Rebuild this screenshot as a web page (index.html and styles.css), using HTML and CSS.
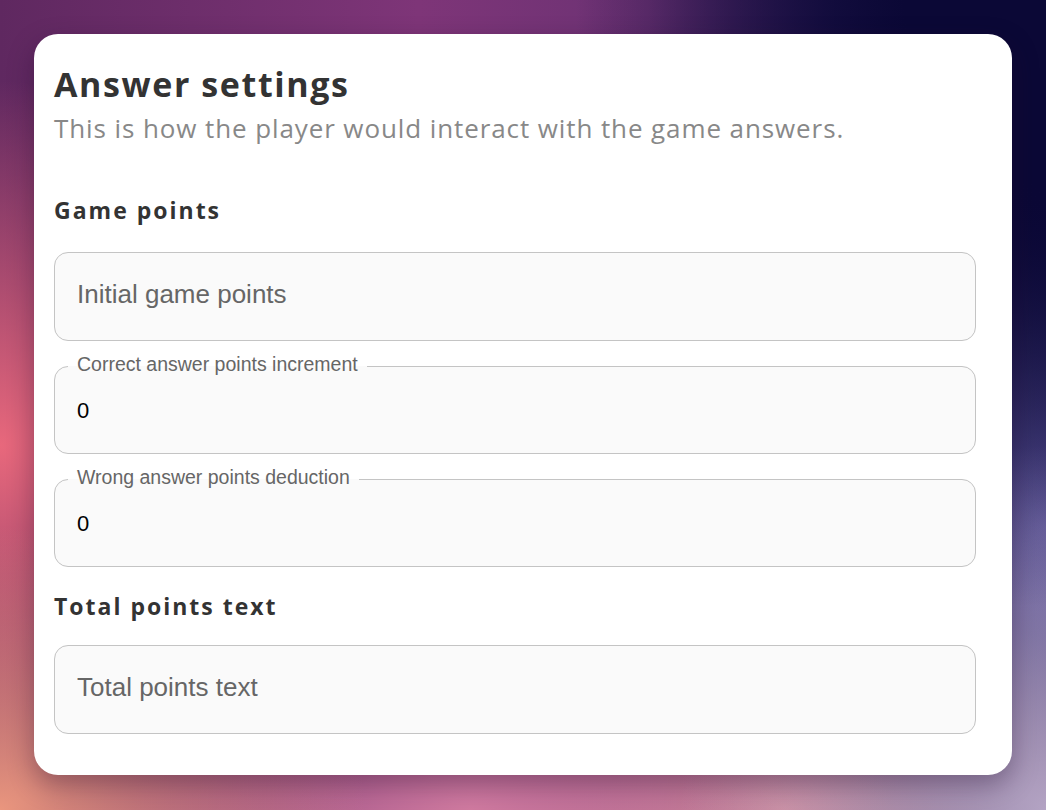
FILE: index.html
```html
<!DOCTYPE html>
<html lang="en">
<head>
<meta charset="utf-8">
<title>Answer settings</title>
<link rel="stylesheet" href="styles.css">
</head>
<body>
<main class="page">
  <section class="card">
    <h1 class="title">Answer settings</h1>
    <p class="subtitle">This is how the player would interact with the game answers.</p>

    <h2 class="section section-first">Game points</h2>
    <fieldset class="field field-empty">
      <input class="field-input" type="text" placeholder="Initial game points">
    </fieldset>
    <fieldset class="field field-filled">
      <legend class="field-label">Correct answer points increment</legend>
      <input class="field-input" type="text" value="0">
    </fieldset>
    <fieldset class="field field-filled">
      <legend class="field-label">Wrong answer points deduction</legend>
      <input class="field-input" type="text" value="0">
    </fieldset>

    <h2 class="section section-second">Total points text</h2>
    <fieldset class="field field-empty">
      <input class="field-input" type="text" placeholder="Total points text">
    </fieldset>
  </section>
</main>
</body>
</html>
```
FILE: styles.css
```css
html, body {
  margin: 0;
  padding: 0;
  height: 100%;
}

body {
  background-color: #8a3d80;
  background-image:
    radial-gradient(ellipse 45% 75% at 100% 0%, #0b0836 0%, #0b0836 30%, rgba(11, 8, 54, 0) 100%),
    radial-gradient(ellipse 35% 45% at 100% 100%, #b4a4c4 0%, rgba(180, 164, 196, 0) 100%),
    radial-gradient(ellipse 30% 40% at 100% 65%, #6a62aa 0%, rgba(106, 98, 170, 0) 100%),
    radial-gradient(ellipse 35% 35% at 0% 100%, #ea967e 0%, rgba(234, 150, 126, 0) 100%),
    radial-gradient(ellipse 35% 45% at 0% 55%, #e8687c 0%, rgba(232, 104, 124, 0) 100%),
    radial-gradient(ellipse 40% 35% at 45% 100%, #d07aa0 0%, rgba(208, 122, 160, 0) 100%),
    radial-gradient(ellipse 35% 30% at 75% 100%, #d4909a 0%, rgba(212, 144, 154, 0) 100%),
    linear-gradient(90deg, #5f2860 0%, #7e3578 40%, #6c3274 62%, #2a1a55 80%, #0b0836 100%);
  background-repeat: no-repeat;
  font-family: "Liberation Sans", Arial, sans-serif;
}

.page {
  box-sizing: border-box;
  height: 100%;
  padding: 34px;
}

.card {
  box-sizing: border-box;
  width: 978px;
  background: #ffffff;
  border-radius: 24px;
  padding: 30px 36px 41px 20px;
  box-shadow: 0 10px 26px rgba(30, 10, 40, 0.35);
}

.title {
  margin: 0;
  font-family: "Open Sans", "Noto Sans", sans-serif;
  font-weight: 700;
  font-size: 34px;
  line-height: 40px;
  letter-spacing: 1.6px;
  color: #333333;
}

.subtitle {
  margin: 8px 0 0;
  font-family: "Open Sans", "Noto Sans", sans-serif;
  font-weight: 400;
  font-size: 26px;
  line-height: 32px;
  letter-spacing: 0.9px;
  color: #888888;
}

.section {
  margin: 0;
  font-family: "Open Sans", "Noto Sans", sans-serif;
  font-weight: 700;
  font-size: 23px;
  line-height: 28px;
  letter-spacing: 2px;
  color: #333333;
}

.section-first {
  margin-top: 52px;
  margin-bottom: 28px;
}

.section-second {
  margin-top: 25px;
  margin-bottom: 25px;
}

.field {
  box-sizing: border-box;
  display: block;
  width: 922px;
  margin: 0;
  padding: 0 22px;
  border: 1px solid #c4c4c4;
  border-radius: 14px;
  background: #fafafa;
  min-width: 0;
}

.field + .field {
  margin-top: 12px;
}

.field-label {
  margin-left: -9px;
  padding: 0 9px 4px;
  font-size: 19.5px;
  line-height: 22px;
  color: #666666;
}

.field-input {
  box-sizing: border-box;
  display: block;
  width: 100%;
  margin: 0;
  border: 0;
  outline: none;
  background: transparent;
  font-family: "Liberation Sans", Arial, sans-serif;
  color: #000000;
}

.field-empty .field-input {
  height: 87px;
  padding: 0 0 4px;
  font-size: 26px;
}

.field-empty .field-input::placeholder {
  color: #666666;
  opacity: 1;
}

.field-filled .field-input {
  height: 74px;
  padding: 0 0 11px;
  font-size: 22px;
}
```
